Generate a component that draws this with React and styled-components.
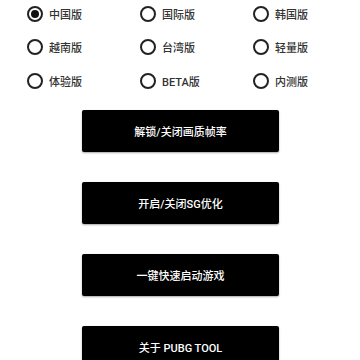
import React, { useState } from 'react';
import styled, { createGlobalStyle } from 'styled-components';

const GlobalStyle = createGlobalStyle`
    html, body {
        margin: 0;
        padding: 0;
        background: #fff;
        font-family: Roboto, "Noto Sans CJK SC", sans-serif;
    }
`;

const Page = styled.div`
    width: 360px;
    height: 360px;
    overflow: hidden;
    background: #fff;
`;

const RadioGrid = styled.div`
    display: grid;
    grid-template-columns: repeat(3, 113px);
    grid-auto-rows: 33.5px;
    padding: 0 0 0 27px;
    margin-top: -3px;
`;

const RadioItem = styled.label`
    display: flex;
    align-items: center;
    gap: 6px;
    font-size: 11px;
    font-weight: 500;
    color: #333;
    cursor: pointer;
`;

const Circle = styled.span`
    box-sizing: border-box;
    width: 16px;
    height: 16px;
    border-radius: 50%;
    border: 2px solid #222;
    display: flex;
    align-items: center;
    justify-content: center;

    &::after {
        content: '';
        width: 8px;
        height: 8px;
        border-radius: 50%;
        background: ${props => (props.checked ? '#111' : 'transparent')};
    }
`;

const Buttons = styled.div`
    display: flex;
    flex-direction: column;
    align-items: center;
    gap: 30px;
    margin-top: 12px;
    padding-left: 1px;
`;

const Button = styled.button`
    width: 197px;
    height: 42px;
    border: none;
    border-radius: 2px;
    background: #000;
    color: #fff;
    font-family: Roboto, "Noto Sans CJK SC", sans-serif;
    font-size: 11px;
    font-weight: 500;
    box-shadow: 0 1px 2px rgba(0, 0, 0, 0.35);
    flex: 0 0 auto;
`;

const versions = ['中国版', '国际版', '韩国版', '越南版', '台湾版', '轻量版', '体验版', 'BETA版', '内测版'];
const actions = ['解锁/关闭画质帧率', '开启/关闭SG优化', '一键快速启动游戏', '关于 PUBG TOOL'];

export default function App() {
    const [selected, setSelected] = useState(0);

    return (
        <Page>
            <GlobalStyle />
            <RadioGrid>
                {versions.map((name, i) => (
                    <RadioItem key={name} onClick={() => setSelected(i)}>
                        <Circle checked={selected === i} />
                        {name}
                    </RadioItem>
                ))}
            </RadioGrid>
            <Buttons>
                {actions.map(text => (
                    <Button key={text}>{text}</Button>
                ))}
            </Buttons>
        </Page>
    );
}
